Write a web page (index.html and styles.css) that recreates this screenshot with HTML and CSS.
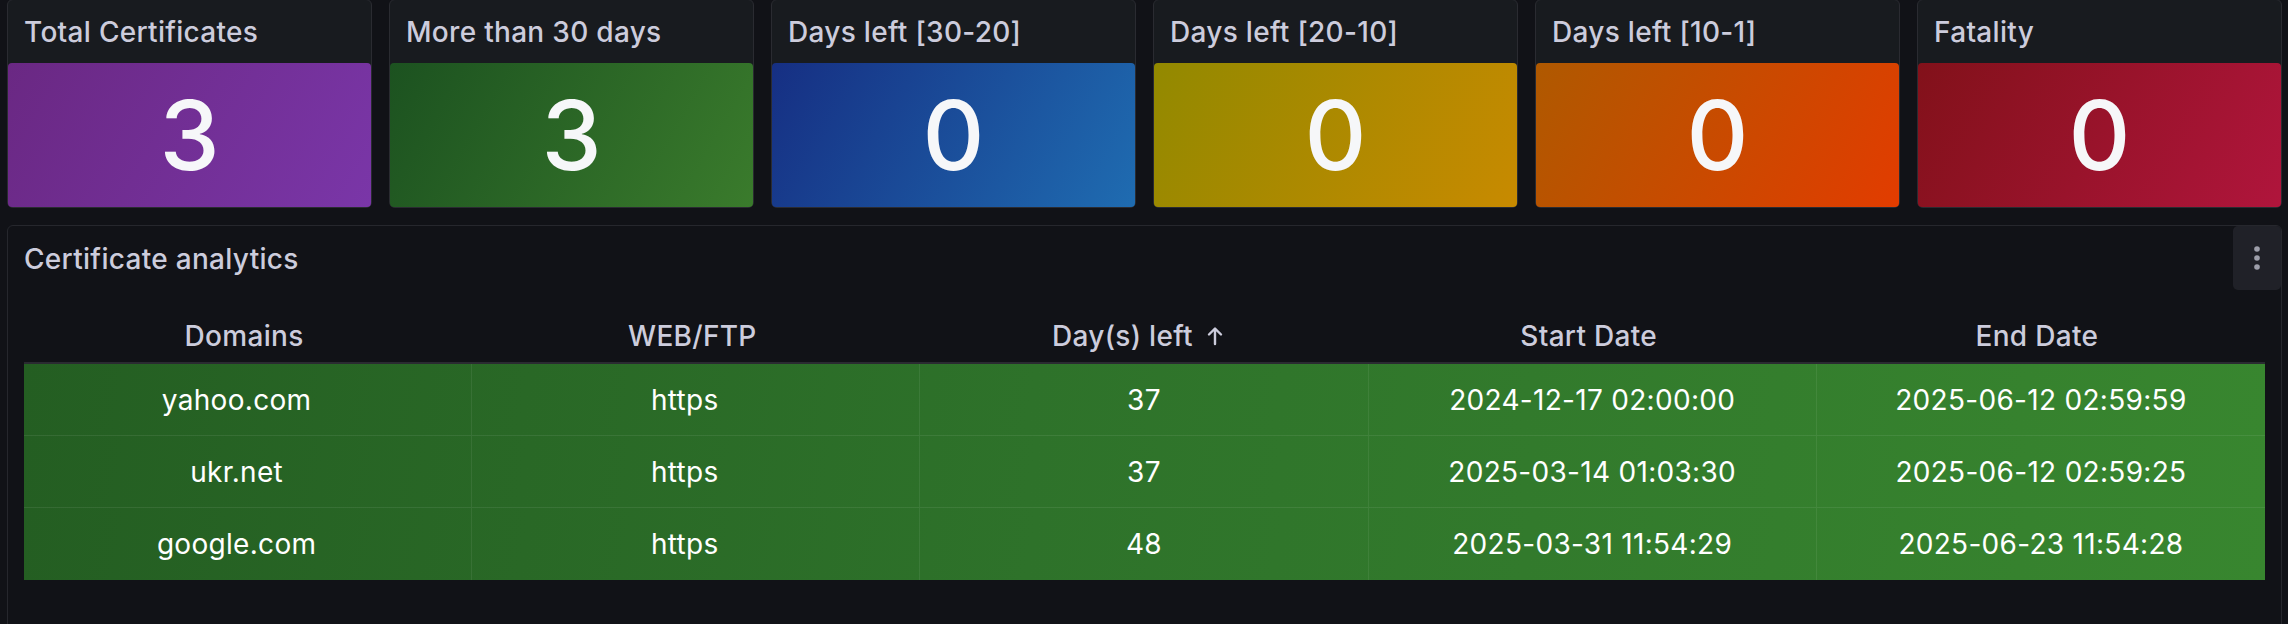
FILE: index.html
```html
<!DOCTYPE html>
<html lang="en">
<head>
<meta charset="utf-8">
<title>Certificates</title>
<link rel="stylesheet" href="styles.css">
</head>
<body>
<div class="dashboard">
  <div class="stats">
    <section class="stat">
      <header class="stat-title">Total Certificates</header>
      <div class="stat-box purple"><span class="stat-value">3</span></div>
    </section>
    <section class="stat">
      <header class="stat-title">More than 30 days</header>
      <div class="stat-box green"><span class="stat-value">3</span></div>
    </section>
    <section class="stat">
      <header class="stat-title">Days left [30-20]</header>
      <div class="stat-box blue"><span class="stat-value">0</span></div>
    </section>
    <section class="stat">
      <header class="stat-title">Days left [20-10]</header>
      <div class="stat-box yellow"><span class="stat-value">0</span></div>
    </section>
    <section class="stat">
      <header class="stat-title">Days left [10-1]</header>
      <div class="stat-box orange"><span class="stat-value">0</span></div>
    </section>
    <section class="stat">
      <header class="stat-title">Fatality</header>
      <div class="stat-box red"><span class="stat-value">0</span></div>
    </section>
  </div>

  <section class="panel">
    <header class="panel-header">
      <h2 class="panel-title">Certificate analytics</h2>
      <button class="menu-btn" aria-label="Menu">
        <svg width="8" height="26" viewBox="0 0 8 26"><circle cx="4" cy="4" r="2.8" fill="#9d9eaa"/><circle cx="4" cy="13" r="2.8" fill="#9d9eaa"/><circle cx="4" cy="22" r="2.8" fill="#9d9eaa"/></svg>
      </button>
    </header>
    <div class="table">
      <div class="thead">
        <div class="th">Domains</div>
        <div class="th">WEB/FTP</div>
        <div class="th">Day(s) left<span class="sort"><svg width="18" height="20" viewBox="0 0 18 20"><path d="M9 18V3M3 8.5L9 2.5l6 6" fill="none" stroke="#ccccdc" stroke-width="2.4" stroke-linecap="round" stroke-linejoin="round"/></svg></span></div>
        <div class="th">Start Date</div>
        <div class="th">End Date</div>
      </div>
      <div class="tr">
        <div class="td text">yahoo.com</div>
        <div class="td text">https</div>
        <div class="td">37</div>
        <div class="td">2024-12-17 02:00:00</div>
        <div class="td">2025-06-12 02:59:59</div>
      </div>
      <div class="tr">
        <div class="td text">ukr.net</div>
        <div class="td text">https</div>
        <div class="td">37</div>
        <div class="td">2025-03-14 01:03:30</div>
        <div class="td">2025-06-12 02:59:25</div>
      </div>
      <div class="tr">
        <div class="td text">google.com</div>
        <div class="td text">https</div>
        <div class="td">48</div>
        <div class="td">2025-03-31 11:54:29</div>
        <div class="td">2025-06-23 11:54:28</div>
      </div>
    </div>
  </section>
</div>
</body>
</html>
```
FILE: styles.css
```css
* { box-sizing: border-box; }

html, body {
  margin: 0;
  background: #111217;
  height: 100%;
  overflow: hidden;
}

body {
  font-family: Inter, "Noto Sans", "Liberation Sans", sans-serif;
  color: #ccccdc;
  padding: 0 6px 0 7px;
  letter-spacing: 0.3px;
}

.dashboard {
  width: 2275px;
}

.stats {
  display: flex;
  gap: 17px;
  margin-top: -1px;
}

.stat {
  width: 365px;
  height: 209px;
  background: #181b1f;
  border: 1px solid #2a2b31;
  border-radius: 6px;
  display: flex;
  flex-direction: column;
}

.stat-title {
  height: 63px;
  padding-left: 16px;
  font-size: 28px;
  font-weight: 500;
  display: flex;
  align-items: center;
  color: #ccccdc;
  white-space: nowrap;
}

.stat-box {
  height: 144px;
  border-radius: 4px;
  display: flex;
  align-items: center;
  justify-content: center;
}

.stat-value {
  font-size: 96px;
  font-weight: 500;
  color: #f6f7f9;
  line-height: 1;
  letter-spacing: 0;
}

.purple { background: linear-gradient(120deg, #6a2883, #7a36a8); }
.green  { background: linear-gradient(120deg, #1c5220, #3a7b2c); }
.blue   { background: linear-gradient(120deg, #162f83, #1f6cb1); }
.yellow { background: linear-gradient(120deg, #928900, #c88a00); }
.orange { background: linear-gradient(120deg, #af5900, #e23c00); }
.red    { background: linear-gradient(120deg, #82111a, #b0153c); }

.panel {
  margin-top: 17px;
  height: 420px;
  border: 1px solid #26272d;
  border-radius: 6px;
  background: #111217;
}

.panel-header {
  height: 64px;
  display: flex;
  align-items: center;
}

.panel-title {
  flex: 1;
  margin: 0;
  padding-left: 16px;
  padding-top: 2px;
  font-size: 28px;
  font-weight: 500;
  color: #ccccdc;
}

.menu-btn {
  width: 48px;
  height: 64px;
  border: 0;
  padding: 0;
  border-radius: 5px;
  background: #202128;
  display: flex;
  align-items: center;
  justify-content: center;
}

.table {
  margin: 0 16px;
}

.thead {
  display: grid;
  grid-template-columns: repeat(5, 1fr);
  height: 74px;
  padding-top: 20px;
  border-bottom: 2px solid #2a2b31;
}

.th {
  display: flex;
  align-items: center;
  justify-content: center;
  padding-right: 8px;
  font-size: 28px;
  font-weight: 500;
  color: #ccccdc;
  white-space: nowrap;
}

.sort {
  display: inline-flex;
  width: 28px;
  margin-left: 8px;
  justify-content: center;
}

.tr {
  display: grid;
  grid-template-columns: repeat(5, 1fr);
  height: 72px;
  background: linear-gradient(100deg, #245e22 0%, #2e722a 45%, #38862f 100%);
  border-bottom: 1px solid rgba(255, 255, 255, 0.08);
}

.tr:last-child {
  border-bottom: 0;
}

.td {
  display: flex;
  align-items: center;
  justify-content: center;
  font-size: 28px;
  font-weight: 400;
  color: #ffffff;
  border-right: 1px solid rgba(255, 255, 255, 0.07);
  white-space: nowrap;
}

.td.text {
  padding-right: 22px;
}

.td:last-child {
  border-right: 0;
}
```
